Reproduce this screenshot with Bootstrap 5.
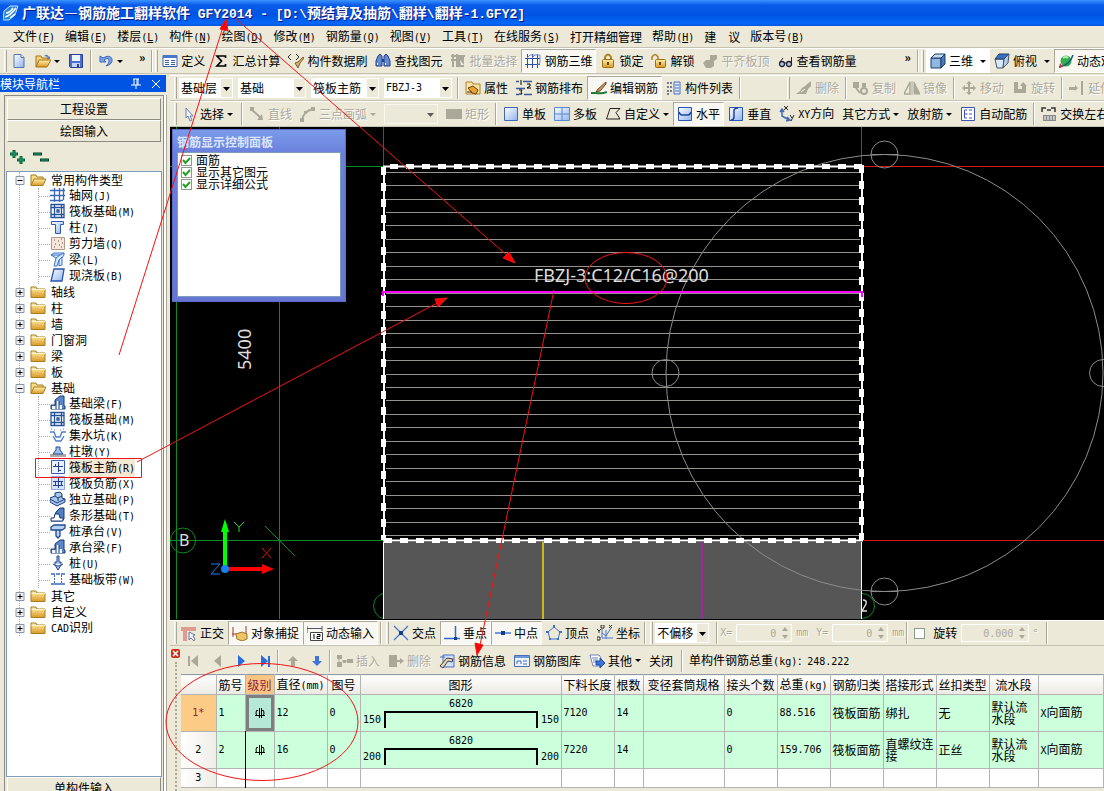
<!DOCTYPE html>
<html lang="zh-CN">
<head>
<meta charset="utf-8">
<meta name="viewport" content="width=device-width, initial-scale=1">
<title>广联达—钢筋施工翻样软件 GFY2014</title>
<link href="https://cdn.jsdelivr.net/npm/bootstrap@5.3.0/dist/css/bootstrap.min.css" rel="stylesheet">
<style>
:root{--face:#ece9d8;--edge:#aca899;--ui:"Noto Sans CJK SC",sans-serif}
body{font:12px/16px var(--ui);color:#000;background:var(--face);height:100vh;overflow:hidden;white-space:nowrap}
.hw,u{font-family:"DejaVu Sans Mono","Noto Sans CJK SC",monospace;font-size:10px}
svg{flex:none;display:block}
.ico{width:16px;height:16px}
.titlebar{height:26px;padding-left:3px;background:linear-gradient(#3a93ff,#0a5ae8 20%,#0054e3 60%,#0468fb 90%,#0453d8);color:#fff;font-size:14px;font-weight:700;text-shadow:1px 1px #0a1883;gap:3px}
.titlebar .hw{font-family:"Liberation Mono",monospace;font-size:13px}
.menubar{height:22px;padding-left:8px;border-bottom:1px solid #c5c2b2}
.menubar .nav-link{color:#000;padding:0 5px}
.band{height:26px;border-top:1px solid #fff;border-bottom:1px solid #c5c2b2;overflow:hidden}
.grip{width:3px;height:22px;border-left:1px solid #fff;border-right:1px solid var(--edge);margin:0 2px 0 4px;flex:none}
.vsep{width:2px;height:22px;border-left:1px solid var(--edge);border-right:1px solid #fff;margin:0 2px;flex:none}
.tool{--bs-btn-color:#000;--bs-btn-disabled-color:#aca899;--bs-btn-disabled-opacity:1;--bs-btn-disabled-border-color:transparent;font:12px/16px var(--ui);padding:0 3px;height:24px;border-radius:0;display:flex;align-items:center;gap:3px;flex:none}
.tool:disabled{text-shadow:1px 1px #fff}
.tool.on{background:#f8f7f2;border-color:#aca899 #fff #fff #aca899}
.arr{width:0;height:0;border:3px solid transparent;border-top-color:currentColor;border-bottom:0}
.viewtools{margin-left:40px}
.pick{appearance:none;font:12px/18px var(--ui);height:20px;padding:0 14px 0 2px;border:0;border-radius:0;color:#000;margin-right:5px;flex:none;background:#fff url("data:image/svg+xml,%3Csvg xmlns='http://www.w3.org/2000/svg' width='14' height='20'%3E%3Cpath fill='%23ece9d8' d='M2 1h11v18H2z'/%3E%3Cpath d='M4 9h7l-3.500 4z'/%3E%3C/svg%3E") right/14px 20px no-repeat}
.pick.hw{font:10px/18px "DejaVu Sans Mono",monospace}
.pick:disabled{background-color:var(--face);border:1px solid #fff;opacity:.6}
.w54{width:54px}.w68{width:68px}
.side{width:170px;flex:none}
.panehead{width:166px;height:17px;background:#0054e3;color:#fff;margin-top:1px}
.pane{width:160px;margin:3px 0 0 4px;padding-top:2px;border:1px solid #8c8c84;border-bottom:0;box-shadow:2px 0 #fff,3px 0 #aca899;min-height:0}
.tabbtn{font:12px/16px var(--ui);height:22px;padding:0;border:1px solid;border-color:#fff #8c8c84 #8c8c84 #fff;border-radius:0;background:var(--face);width:154px;color:#000}
.lastbtn{margin-bottom:-8px}
.expand{flex:0 0 29px}
.treebox{background:#fff;border:1px solid #7f9db9;width:156px;overflow:hidden;min-height:0}
.lv0{margin:0 0 0 12px;border-left:1px dotted #aaa}
.lv1{margin:0 0 0 18px;border-left:1px dotted #aaa}
.lv1 li{display:flex;align-items:center;height:16px}
.lv1 li::before{content:"";width:11px;border-top:1px dotted #aaa}
.lv1 a{display:flex;gap:3px}
.side a{color:#000;text-decoration:none}
.fold{display:flex;align-items:center;height:16px;margin-left:-5px}
.fold svg.ico{margin:0 5px}
.hot{background:#f3e8d6}
.work{min-width:0;padding-top:1px}
.viewport{background:#000;min-height:0;position:relative;overflow:hidden}
.floatbox{position:absolute;left:2px;top:2px;width:174px;height:173px;background:linear-gradient(#7b9bea,#6a7fdc 14%,#6576d4);border:1px solid #5c6cc8;padding:3px 4px}
.floatbox h2{font:bold 12px/18px var(--ui);color:#dbe6fb;margin:0;height:19px}
.floatbox .inner{background:#fff;border:1px solid #7f9db9;height:145px;padding-top:1px}
.opt{display:flex;align-items:center;gap:4px;height:12px;line-height:12px;padding-left:3px}
.tick{width:11px;height:11px;margin:0;border:1px solid #8c9a8c;border-radius:0!important;flex:none}
.tick:checked{background:#fff url("data:image/svg+xml,%3Csvg xmlns='http://www.w3.org/2000/svg' viewBox='0 0 9 9'%3E%3Cpath d='M1 4l2.500 3L8 2' fill='none' stroke='%2321a121' stroke-width='2'/%3E%3C/svg%3E");border-color:#8c9a8c}
.scene text{fill:#ddd;font-family:"Noto Sans",sans-serif}
.num{height:18px;border:1px solid #fff;border-radius:0;background:transparent!important;color:#aca899;text-align:right;padding:0 15px 0 2px;font:10px/16px "DejaVu Sans Mono",monospace;width:56px;flex:none}
.num.w68{width:68px}
.spinbox{position:relative}
.spinbox svg{position:absolute;right:3px;top:3px}
.dim{color:#aca899;text-shadow:1px 1px #fff}
.editor{height:145px;overflow:hidden;padding-top:1px}
.editbar{height:27px}
.shut{width:9px;height:9px;padding:0;border:0;border-radius:2px;background:#c8321e;margin-top:2px}
.rail{width:11px}
.dots{width:2px;border-left:2px dotted #aaa794;margin-top:4px}
.grid{--bs-table-bg:transparent;table-layout:fixed;margin:0;background:#fff;border-top:1px solid #8c9aa8;width:100%}
.grid th,.grid td{padding:0 0 0 2px;border:1px solid #b4b4b4;border-width:0 1px 1px 0;font-weight:400;line-height:12px;height:37px;vertical-align:middle;color:#000;overflow:hidden}
.grid thead th{height:20px;padding:0;text-align:center;background:linear-gradient(#fff,#ebe9e2)}
.grid tbody th{text-align:center;padding:0;background:linear-gradient(90deg,#fff,#efede6)}
.grid .fill td{background:#ccffdc}
.grid .blank th,.grid .blank td{height:19px}
.grid thead .cur{background:#f9c583;color:#902040}
.grid tbody .cur{background:#fccb85;color:#902040}
.grid .sel{background:#b6e8d8!important;box-shadow:inset 0 0 0 3px #7f7f7f}
.grid .lvl{text-align:center;padding:0}
.grid .lvl svg{margin:auto}
.grid .wrap{white-space:normal}
.grid .shape{padding:0}
.marks{position:absolute;inset:0;width:100%;height:100%;pointer-events:none;z-index:5}
</style>
</head>
<body class="d-flex flex-column position-relative">
<svg width="0" height="0" class="position-absolute" aria-hidden="true"><defs>
<linearGradient id="gb" x2="1" y2="1"><stop stop-color="#fff"/><stop offset="1" stop-color="#8fb4ee"/></linearGradient>
<linearGradient id="gy" x2="0" y2="1"><stop stop-color="#fff0ae"/><stop offset="1" stop-color="#d99a25"/></linearGradient>
<symbol id="logo" viewBox="0 0 16 16"><path d="M1 6L7 1h8l-3 9-6 5H0z" fill="#2a86d8" stroke="#bfe4ff"/><path d="M2 12q5-1 11-9M3 8q4 0 7-5M7 13l5-4" stroke="#fff" stroke-width="1.500" fill="none"/></symbol>
<symbol id="new" viewBox="0 0 16 16"><path d="M3 1.500h7l3 3v10H3z" fill="url(#gb)" stroke="#5574a8"/><path d="M10 1.500v3h3" fill="#fff" stroke="#5574a8"/></symbol>
<symbol id="open" viewBox="0 0 16 16"><path d="M1 14V3h5l1 2h6v2" fill="#f5d27a" stroke="#a57314"/><path d="M1 14l3-7h12l-4 7z" fill="url(#gy)" stroke="#a57314"/><path d="M9 3q3-3 5 1l1-1v3h-3l1-1q-1-2-4-2" fill="#5a7fc0"/></symbol>
<symbol id="save" viewBox="0 0 16 16"><path d="M1.500 1.500h13v13h-12l-1-1z" fill="#4d6fd0" stroke="#283f94"/><path d="M4 2h8v6H4z" fill="#eef3ff"/><path d="M4 10h8v4H4z" fill="#c9d5ee"/><path d="M9 11h2v3H9z" fill="#283f94"/></symbol>
<symbol id="undo" viewBox="0 0 16 16"><path d="M2 3v6h6L6 7q4-3 5 0 1 3-3 6 7-2 6-7-2-5-9-1z" fill="#7ba4e6" stroke="#3b66bd"/></symbol>
<symbol id="def" viewBox="0 0 16 16"><path d="M1 2.500h14v11H1z" fill="#fff" stroke="#3a62b0"/><path d="M1 2h14v3H1z" fill="#4878cc"/><path d="M3 7.500h4M3 9.500h4M3 11.500h4M9 7.500h4M9 9.500h4M9 11.500h4" stroke="#3a62b0"/></symbol>
<symbol id="sum" viewBox="0 0 16 16"><path d="M12.500 5V3H4l4.500 5L4 13h8.500v-2" fill="none" stroke="#000" stroke-width="1.700"/></symbol>
<symbol id="brush" viewBox="0 0 16 16"><path d="M3 1L0 4l3 3M8 1l3 3-3 3" fill="none" stroke="#333"/><path d="M15 4l-5 5-3 1 3 5 2-5 4-5z" fill="#d9b15c" stroke="#776034"/></symbol>
<symbol id="find" viewBox="0 0 16 16"><path d="M3 3l2-2 2 2v10H1V8zM13 3l-2-2-2 2v10h6V8z" fill="#6389d2" stroke="#243f88"/><path d="M7 6h2v3H7z" fill="#243f88"/><path d="M2.500 10v2M10.500 10v2" stroke="#fff"/></symbol>
<symbol id="batch" viewBox="0 0 16 16"><path d="M1 3h14M1 7h8M3 1v13M7 1v13" stroke="#aaa898" stroke-width="2"/><path d="M8 4h6v10H8z" fill="#aaa898"/><path d="M10 7l4 5h-3z" fill="#eee"/></symbol>
<symbol id="bars" viewBox="0 0 16 16"><path d="M0 5.500h15M0 11.500h15M2.500 1v14M7.500 1v14M12.500 1v14" stroke="#2c50a0" fill="none"/><path d="M2 5l3-3h10v8l-3 2M7 5l3-3" stroke="#7891c8" fill="none"/></symbol>
<symbol id="lock" viewBox="0 0 16 16"><path d="M5 7V4q3-5 6 0v3" fill="none" stroke="#b08125" stroke-width="2"/><rect x="2.500" y="6.500" width="11" height="8" rx="1" fill="url(#gy)" stroke="#9c6b12"/><path d="M8 9v3" stroke="#6a4505" stroke-width="2"/></symbol>
<symbol id="unlock" viewBox="0 0 16 16"><path d="M1 7V4q3-5 6 0v3" fill="none" stroke="#b08125" stroke-width="1.500"/><rect x="4.500" y="6.500" width="10" height="8" rx="1" fill="url(#gy)" stroke="#9c6b12"/><path d="M9 9v3" stroke="#6a4505" stroke-width="2"/></symbol>
<symbol id="slab" viewBox="0 0 16 16"><path d="M8 2h7v4l-3 2v5l-3 2H4l-3-5 3-3h4z" fill="#aaa898"/></symbol>
<symbol id="glass" viewBox="0 0 16 16"><circle cx="4" cy="11" r="2.500" fill="#b9c7e0" stroke="#223" stroke-width="1.300"/><circle cx="11" cy="11" r="2.500" fill="#b9c7e0" stroke="#223" stroke-width="1.300"/><path d="M7 10h1M2 9l3-4M13.500 10V4" stroke="#223" fill="none"/></symbol>
<symbol id="cube" viewBox="0 0 16 16"><path d="M1 5h10v10H1z" fill="#8fb9e4" stroke="#1c3c66"/><path d="M1 5l4-4h10l-4 4z" fill="#c6def5" stroke="#1c3c66"/><path d="M11 5l4-4v10l-4 4z" fill="#4a7cba" stroke="#1c3c66"/></symbol>
<symbol id="top3" viewBox="0 0 16 16"><path d="M1 6h9l-1 9H3z" fill="#dbe8f8" stroke="#456"/><path d="M1 6l4-5h10l-5 5z" fill="#3b6fc0" stroke="#1c3c66"/><path d="M10 6l5-5-1 9-5 5z" fill="#b5cce8" stroke="#456"/></symbol>
<symbol id="orbit" viewBox="0 0 16 16"><circle cx="8" cy="8" r="5.500" fill="#35ad4a"/><path d="M5 5q3-2 5 0" stroke="#b4f0b4" stroke-width="2" fill="none"/><path d="M1 14Q12 12 15 2" fill="none" stroke="#175d8c" stroke-width="1.500"/><path d="M1 15l1-5 3 4z" fill="#c33"/></symbol>
<symbol id="prop" viewBox="0 0 16 16"><path d="M1 2h6l1 2h7v10H1z" fill="#fbe3a0" stroke="#a8833a"/><path d="M3 8l5-2 5 4-2 4-4-1z" fill="#e9a037" stroke="#6e4210"/><path d="M2 12h5" stroke="#333"/></symbol>
<symbol id="rank" viewBox="0 0 16 16"><path d="M0 1.500h3M7 1.500h9M0 8.500h9M0 14.500h3M8 14.500h8" stroke="#38589c" stroke-width="1.300"/><path d="M5 0v5M11 4h3v2l-3 2h4M3 10h3l-1 2 1 2H3" stroke="#000" fill="none"/></symbol>
<symbol id="edit" viewBox="0 0 16 16"><path d="M15 2L7 9l-2 3 4-1 6-7z" fill="#d29d5c" stroke="#6b4322"/><path d="M0 13h5q6 1 11-1" stroke="#217a38" stroke-width="2" fill="none"/></symbol>
<symbol id="list" viewBox="0 0 16 16"><path d="M1 3h2M1 7h2M1 11h2M1 14h2M4 3h2M4 7h2M4 11h2" stroke="#557" stroke-width="1.500"/><path d="M8 2h6v12H8z" fill="#dce8fb" stroke="#4a6fb8"/><path d="M9 5h4M9 8h4M9 11h4" stroke="#4a6fb8"/></symbol>
<symbol id="del" viewBox="0 0 16 16"><path d="M15 1L9 6l-3 2-2 3-4 3h10l2-5 3-3z" fill="#aaa898"/><path d="M5 12l4-3" stroke="#fff"/></symbol>
<symbol id="copy" viewBox="0 0 16 16"><path d="M0 2h6v6H0zM9 3h4v4H9z" fill="#aaa898"/><circle cx="11" cy="11" r="3" fill="none" stroke="#aaa898" stroke-width="2"/><path d="M3 8l4 5" stroke="#aaa898" stroke-width="2"/></symbol>
<symbol id="mirror" viewBox="0 0 16 16"><path d="M6 2v12H0z" fill="none" stroke="#aaa898" stroke-width="1.500"/><path d="M8 1v14M10 2v12h6z" fill="#aaa898" stroke="#aaa898"/></symbol>
<symbol id="move" viewBox="0 0 16 16"><path d="M8 1l3 3H9v3h3V5l3 3-3 3V9H9v3h2l-3 3-3-3h2V9H4v2L1 8l3-3v2h3V4H5z" fill="#aaa898"/></symbol>
<symbol id="rotate" viewBox="0 0 16 16"><path d="M2 2h4v7h4V6H8l3-4 4 4h-1v7H2z" fill="#aaa898"/></symbol>
<symbol id="extend" viewBox="0 0 16 16"><path d="M0 7h6v3H0zM6 5l3 3-3 3zM12 1h2v14h-2z" fill="#aaa898"/></symbol>
<symbol id="arrow" viewBox="0 0 16 16"><path d="M5 2v10l2-2 2 5 2-1-2-4h3z" fill="#eef2fb" stroke="#6a80ac"/></symbol>
<symbol id="line" viewBox="0 0 16 16"><path d="M2 3l10 9" stroke="#aaa898" stroke-width="2"/><path d="M1 1h4v4H1zM14 14H8l5-6z" fill="#aaa898"/></symbol>
<symbol id="arc" viewBox="0 0 16 16"><path d="M2 15Q3 5 13 3" stroke="#aaa898" stroke-width="2" fill="none"/><path d="M11 1h4v4h-4zM0 12h4v4H0zM4 5h3v3H4z" fill="#aaa898"/></symbol>
<symbol id="rectg" viewBox="0 0 16 16"><path d="M0 3h16v10H0z" fill="#aaa898"/></symbol>
<symbol id="one" viewBox="0 0 16 16"><path d="M1.500 1.500h13v13h-13z" fill="url(#gb)" stroke="#4168b8"/></symbol>
<symbol id="four" viewBox="0 0 16 16"><path d="M.5 1.500h15v13H.5zM8 1v14M0 8h16" fill="url(#gb)" stroke="#5a86cc"/></symbol>
<symbol id="poly" viewBox="0 0 16 16"><path d="M5 2.500h10l-4 4 4 6.500H1.500z" fill="none" stroke="#222"/></symbol>
<symbol id="horz" viewBox="0 0 16 16"><path d="M1.500 1.500h13v13h-13z" fill="url(#gb)" stroke="#2c55b4"/><path d="M2 6q1 3 3 3h6q2 0 3-3" fill="none" stroke="#2145a0" stroke-width="1.500"/></symbol>
<symbol id="vert" viewBox="0 0 16 16"><path d="M1.500 1.500h13v13h-13z" fill="url(#gb)" stroke="#2c55b4"/><path d="M10 2q-4 0-4 3v6q0 3-3 3" fill="none" stroke="#2145a0" stroke-width="1.500"/></symbol>
<symbol id="xy" viewBox="0 0 16 16"><path d="M3 4v6l7 4M1 6l2-3 2 3M8 11l3 3-4 1" fill="none" stroke="#4169b8" stroke-width="1.500"/><path d="M5 0l4 4M9 0L5 4M11 9l2 3M15 9l-3 6" stroke="#222"/></symbol>
<symbol id="auto" viewBox="0 0 16 16"><path d="M1.500 1.500h13v13h-13z" fill="#fff" stroke="#3c50b8"/><path d="M7 4H4.500v8H7M4.500 8h3M9 4h3M9 12h3M9 8h3" fill="none" stroke="#3c50b8"/></symbol>
<symbol id="swap" viewBox="0 0 16 16"><path d="M1 6V2h4M14 6V2h-4M6 4h4" fill="none" stroke="#333" stroke-width="1.500"/><path d="M2 9h13v6H2z" fill="#888"/><path d="M4 10v4M7 10v4M10 10v4M13 10v4" stroke="#fff"/></symbol>
<symbol id="ortho" viewBox="0 0 16 16"><path d="M0 2h15v4H6v10H2V6H0z" fill="#df9b92"/><path d="M8 7v8l2-2 3 3 1-2-2-3 2-1z" fill="#eef" stroke="#68799c"/></symbol>
<symbol id="snap" viewBox="0 0 16 16"><path d="M1 2v10M14 1v8M0 9h15" stroke="#a33b2b" fill="none"/><path d="M4 9l6-2 5 2v5l-5 2-5-2z" fill="#eec566" stroke="#9d7529"/></symbol>
<symbol id="dyn" viewBox="0 0 16 16"><path d="M0 1v7M15 1v5M0 3.500h15" stroke="#556" fill="none"/><path d="M3.500 7.500h12v8h-12z" fill="#fff" stroke="#444"/><path d="M7 9v5M10 9.500h3v2h-3v2h3" stroke="#000" fill="none"/></symbol>
<symbol id="cross" viewBox="0 0 16 16"><path d="M1 1l14 14M15 1L1 15" stroke="#4679d6" stroke-width="1.300"/><path d="M6 6h4v4H6z" fill="#173d8c"/></symbol>
<symbol id="perp" viewBox="0 0 16 16"><path d="M0 13.500h16M11.500 1v12" stroke="#3467ca" stroke-width="1.500"/><path d="M10 12h3v3h-3z" fill="#173d8c"/></symbol>
<symbol id="mid" viewBox="0 0 16 16"><path d="M0 8h16" stroke="#4679d6" stroke-width="1.500"/><path d="M6 6h4v4H6z" fill="#173d8c"/></symbol>
<symbol id="vertex" viewBox="0 0 16 16"><path d="M8 2l6 5-2 7H4L2 7z" fill="none" stroke="#3d70c8"/><path d="M7 0h2v3H7zM0 6h3v2H0zM13 6h3v2h-3zM3 13h2v2H3zM11 13h2v2h-2z" fill="#3d70c8"/></symbol>
<symbol id="coord" viewBox="0 0 16 16"><path d="M5 3v10h11M5 8l4 3 5-8M9 5v9" fill="none" stroke="#4679d6"/><path d="M0 4l2 2 2-2M2 6v2M7 0h-3v3h3zM12 0l3 3M15 0l-3 3M0 12h3v3H0z" stroke="#333" fill="none"/></symbol>
<symbol id="ins" viewBox="0 0 16 16"><path d="M0 2h5v4H0zM0 9h5v5H0zM6 7h3v3H6zM10 6h6v4h-6z" fill="#aaa898"/><path d="M2 6v4M5 8h6" stroke="#aaa898"/></symbol>
<symbol id="rem" viewBox="0 0 16 16"><path d="M1 2h8v12H1zM9 7h3V5l4 3-4 3V9H9z" fill="#aaa898"/></symbol>
<symbol id="info" viewBox="0 0 16 16"><path d="M1 4h5M4 2h11v12H4z" fill="#cfe0f8" stroke="#4a6fb8"/><path d="M1 13l7-8 6 1-1 3-4-1-5 7z" fill="#f3d59a" stroke="#2d3f66"/></symbol>
<symbol id="lib" viewBox="0 0 16 16"><path d="M.5 2.500h15v11H.5z" fill="#eaf2ff" stroke="#4a6fb8"/><path d="M1 3h14v2H1z" fill="#6d97dc"/><path d="M3 11V8h4v3M9 8h4M9 11h4" fill="none" stroke="#4a6fb8"/></symbol>
<symbol id="other" viewBox="0 0 16 16"><path d="M1 2h9l2 3v8H4z" fill="#fff" stroke="#6a83b5"/><path d="M3 5h6M4 7h5M4 9h3" stroke="#6a83b5"/><path d="M7 8h4V5l5 5-5 5v-3H7z" fill="#3f74d8" stroke="#234a9c"/></symbol>
<symbol id="fc" viewBox="0 0 16 16"><path d="M1 13.500V3h5l1 2h8v8.500z" fill="url(#gy)" stroke="#a57c1e"/><path d="M1.500 5.500H15" stroke="#fff5c8"/></symbol>
<symbol id="fo" viewBox="0 0 16 16"><path d="M1 13V3h5l1 2h6v2" fill="#f8dc88" stroke="#a57c1e"/><path d="M1 13.500L4 7h12l-3 6.500z" fill="url(#gy)" stroke="#a57c1e"/></symbol>
<symbol id="minus" viewBox="0 0 9 9"><path d="M.5.5h8v8h-8z" fill="#f4f2ec" stroke="#8795ab"/><path d="M2 4.500h5" stroke="#000"/></symbol>
<symbol id="plus" viewBox="0 0 9 9"><path d="M.5.5h8v8h-8z" fill="#f4f2ec" stroke="#8795ab"/><path d="M2 4.500h5M4.500 2v5" stroke="#000"/></symbol>
<symbol id="t1" viewBox="0 0 16 16"><path d="M0 3.500h15M0 8.500h15M0 13.500h13M4.500 1v14M9.500 1v14M13.500 1v12" stroke="#3a68bd" stroke-width="1.300"/></symbol>
<symbol id="t2" viewBox="0 0 16 16"><path d="M1 1.500h13v13H1zM4.500 4.500h7v7h-7zM7 7h2v2H7zM4.500 1v14M11.500 1v14M1 4.500h13M1 11.500h13" fill="none" stroke="#24509c" stroke-width="1.300"/></symbol>
<symbol id="t3" viewBox="0 0 16 16"><path d="M1.500 2.500h12v3h-3v9h-5v-9h-4z" fill="url(#gb)" stroke="#2d5bb0"/></symbol>
<symbol id="t4" viewBox="0 0 16 16"><path d="M1.500 2.500h13v12h-13z" fill="#f6e6dc" stroke="#b59887"/><path d="M4 5h1M8 6h1M11 4h1M5 9h1M9 10h1M12 8h1M4 12h1M11 12h1" stroke="#744"/></symbol>
<symbol id="t5" viewBox="0 0 16 16"><path d="M1 4l3-2h10v2l-2 3v7l-3 1V9l-2 6H4l2-8z" fill="#d8e8fc" stroke="#3b75c8"/><path d="M1 4h9l-4 3M10 4l4-2M9 9l3-3" stroke="#3b75c8" fill="none"/></symbol>
<symbol id="t6" viewBox="0 0 16 16"><path d="M4 2h10l-2 12H1z" fill="url(#gb)" stroke="#2854aa" stroke-width="1.300"/></symbol>
<symbol id="t7" viewBox="0 0 16 16"><path d="M1 14v-4h4V5l5-4h4v10h1v3z" fill="#5b87c8" stroke="#183a78"/><path d="M6 6h3v4h3v4H2v-3h4z" fill="#eef5ff"/><path d="M6 6v8M9 6v8" stroke="#183a78"/></symbol>
<symbol id="t8" viewBox="0 0 16 16"><path d="M0 5h4l2 5h4l2-5h4M3 9l3 5h5l3-5" fill="none" stroke="#4d7cc4" stroke-width="1.300"/><path d="M1 2h1M4 3h1M10 3h1M13 2h1" stroke="#4d7cc4"/></symbol>
<symbol id="t9" viewBox="0 0 16 16"><path d="M0 11h16v3H0z" fill="#aaa"/><path d="M3 11l3-4V4h4v3l3 4z" fill="#9fc0ec" stroke="#234c94"/></symbol>
<symbol id="t10" viewBox="0 0 16 16"><path d="M1.500 1.500h13v13h-13z" fill="#eaf1ff" stroke="#3a5cb8"/><path d="M3 7.500h10M8.500 3v10M5.500 5v3M8 11.500h3" stroke="#223f94" fill="none"/></symbol>
<symbol id="t11" viewBox="0 0 16 16"><path d="M1.500 1.500h13v13h-13z" fill="#d6e3fb" stroke="#8ba4dc"/><path d="M3 6.500h10M3 10.500h10M8.500 3v10M5.500 6v5M11.500 6v5" stroke="#223f94" fill="none"/></symbol>
<symbol id="t12" viewBox="0 0 16 16"><path d="M0 7l5-2V2l5-1 2 2v4l3 1v3l-8 4-7-4z" fill="#a9c5ec" stroke="#183a78"/><path d="M5 5l3 2 4-2M8 7v3M0 8l7 4 8-4" fill="none" stroke="#183a78"/></symbol>
<symbol id="t13" viewBox="0 0 16 16"><path d="M1 14l3-3 2-6 4-4h4v11l-2 2z" fill="#537fc0" stroke="#183a78"/><path d="M1 14v-3h3l1-4h4l1 4h3v3z" fill="#fff" stroke="#183a78"/></symbol>
<symbol id="t14" viewBox="0 0 16 16"><path d="M1 4l3-2h11v3l-3 2H1zM6 7h4v6l-2 2-2-2z" fill="#b8d0f2" stroke="#21498e" stroke-width="1.300"/></symbol>
<symbol id="t15" viewBox="0 0 16 16"><path d="M7 1h2v6h2v3l-3 5-3-5V7h2zM3 9q5 4 10 0" fill="#a9c5ec" stroke="#21498e"/></symbol>
<symbol id="t16" viewBox="0 0 16 16"><path d="M1 3h4M6 3h4M11 3h4M1 13h14" stroke="#3c68b8" stroke-width="1.500"/><path d="M4.500 4v9M11.500 4v9" stroke="#3c68b8" stroke-dasharray="2 1"/></symbol>
<symbol id="reb" viewBox="0 0 12 12"><path d="M5.500 1v10M7.500 1v10M1 8.500h10M4 3.500H2.500q-1 2.500 0 5M8 3.500h1.500q1 2.500 0 5" fill="none" stroke="#000"/></symbol>
<symbol id="spin" viewBox="0 0 8 12"><path d="M4 0l3 4H1zM4 12L1 8h6z" fill="#aca899"/></symbol>
</defs></svg>

<header class="titlebar d-flex align-items-center flex-shrink-0"><svg class="ico"><use href="#logo"/></svg><span>广联达—钢筋施工翻样软件<span class="hw">&nbsp;GFY2014 - [D:\</span>预结算及抽筋<span class="hw">\</span>翻样<span class="hw">\</span>翻样<span class="hw">-1.GFY2]</span></span></header>

<nav class="menubar nav flex-nowrap align-items-center flex-shrink-0" aria-label="菜单">
<a class="nav-link" href="#">文件<span class="hw">(<u>F</u>)</span></a><a class="nav-link" href="#">编辑<span class="hw">(<u>E</u>)</span></a><a class="nav-link" href="#">楼层<span class="hw">(<u>L</u>)</span></a><a class="nav-link" href="#">构件<span class="hw">(<u>N</u>)</span></a><a class="nav-link" href="#">绘图<span class="hw">(<u>D</u>)</span></a><a class="nav-link" href="#">修改<span class="hw">(<u>M</u>)</span></a><a class="nav-link" href="#">钢筋量<span class="hw">(<u>Q</u>)</span></a><a class="nav-link" href="#">视图<span class="hw">(<u>V</u>)</span></a><a class="nav-link" href="#">工具<span class="hw">(<u>T</u>)</span></a><a class="nav-link" href="#">在线服务<span class="hw">(<u>S</u>)</span></a><a class="nav-link" href="#">打开精细管理</a><a class="nav-link" href="#">帮助<span class="hw">(<u>H</u>)</span></a><a class="nav-link" href="#">建　议</a><a class="nav-link" href="#">版本号<span class="hw">(<u>B</u>)</span></a>
</nav>

<div class="band d-flex align-items-center flex-shrink-0" role="toolbar">
<span class="grip me-0"></span>
<button class="btn tool" aria-label="新建"><svg class="ico"><use href="#new"/></svg></button>
<button class="btn tool" aria-label="打开"><svg class="ico"><use href="#open"/></svg><i class="arr"></i></button>
<button class="btn tool" aria-label="保存"><svg class="ico"><use href="#save"/></svg></button>
<span class="vsep"></span>
<button class="btn tool" aria-label="撤销"><svg class="ico"><use href="#undo"/></svg><i class="arr"></i></button>
<button class="btn tool pb-2 ms-2 fw-bold" aria-label="更多">»</button>
<span class="vsep"></span><span class="grip ms-0 me-0"></span>
<button class="btn tool"><svg class="ico"><use href="#def"/></svg>定义</button>
<button class="btn tool"><svg class="ico"><use href="#sum"/></svg>汇总计算</button>
<button class="btn tool"><svg class="ico"><use href="#brush"/></svg>构件数据刷</button>
<button class="btn tool"><svg class="ico"><use href="#find"/></svg>查找图元</button>
<button class="btn tool" disabled><svg class="ico"><use href="#batch"/></svg>批量选择</button>
<button class="btn tool on"><svg class="ico"><use href="#bars"/></svg>钢筋三维</button>
<button class="btn tool"><svg class="ico"><use href="#lock"/></svg>锁定</button>
<button class="btn tool"><svg class="ico"><use href="#unlock"/></svg>解锁</button>
<button class="btn tool" disabled><svg class="ico"><use href="#slab"/></svg>平齐板顶</button>
<button class="btn tool"><svg class="ico"><use href="#glass"/></svg>查看钢筋量</button>
<div class="d-flex align-items-center flex-shrink-0 viewtools">
<button class="btn tool pb-2 fw-bold" aria-label="更多">»</button>
<span class="vsep"></span><span class="grip ms-0"></span>
<button class="btn tool bg-white"><svg class="ico"><use href="#cube"/></svg>三维<i class="arr ms-1"></i></button>
<button class="btn tool"><svg class="ico"><use href="#top3"/></svg>俯视<i class="arr ms-1"></i></button>
<button class="btn tool on"><svg class="ico"><use href="#orbit"/></svg>动态观</button>
</div>
</div>

<main class="d-flex flex-grow-1 overflow-hidden">
<aside class="side d-flex flex-column">
<div class="panehead d-flex align-items-center justify-content-between flex-shrink-0"><span>模块导航栏</span><span class="d-flex gap-2 pe-1"><svg width="12" height="12"><path d="M3 1h6M4 1v6M8 1v6M7 1v6M1 7h10M6 7v4" stroke="#fff" fill="none"/></svg><svg width="12" height="12"><path d="M2 2l8 8M10 2L2 10" stroke="#fff"/></svg></span></div>
<div class="pane d-flex flex-column flex-grow-1 align-items-center">
<button class="btn tabbtn flex-shrink-0">工程设置</button>
<button class="btn tabbtn flex-shrink-0">绘图输入</button>
<div class="expand d-flex align-items-center align-self-stretch gap-2 ps-1"><svg width="16" height="16"><path d="M1 5h8M5 1v8M8 11h8M12 7v8" stroke="#063" stroke-width="3"/><path d="M2 5h6M5 2v6M9 11h6M12 8v6" stroke="#2a9a7a"/></svg><svg width="16" height="16"><path d="M0 5h9M7 11h9" stroke="#042" stroke-width="3"/><path d="M1 5h7M8 11h7" stroke="#2a9a7a"/></svg></div>
<div class="treebox flex-grow-1">
<ul class="list-unstyled lv0">
<li><a class="fold" href="#"><svg width="10" height="9"><use href="#minus"/></svg><svg class="ico"><use href="#fo"/></svg>常用构件类型</a>
<ul class="list-unstyled lv1">
<li><a href="#"><svg class="ico"><use href="#t1"/></svg><span>轴网<span class="hw">(J)</span></span></a></li>
<li><a href="#"><svg class="ico"><use href="#t2"/></svg><span>筏板基础<span class="hw">(M)</span></span></a></li>
<li><a href="#"><svg class="ico"><use href="#t3"/></svg><span>柱<span class="hw">(Z)</span></span></a></li>
<li><a href="#"><svg class="ico"><use href="#t4"/></svg><span>剪力墙<span class="hw">(Q)</span></span></a></li>
<li><a href="#"><svg class="ico"><use href="#t5"/></svg><span>梁<span class="hw">(L)</span></span></a></li>
<li><a href="#"><svg class="ico"><use href="#t6"/></svg><span>现浇板<span class="hw">(B)</span></span></a></li>
</ul></li>
<li><a class="fold" href="#"><svg width="10" height="9"><use href="#plus"/></svg><svg class="ico"><use href="#fc"/></svg>轴线</a></li>
<li><a class="fold" href="#"><svg width="10" height="9"><use href="#plus"/></svg><svg class="ico"><use href="#fc"/></svg>柱</a></li>
<li><a class="fold" href="#"><svg width="10" height="9"><use href="#plus"/></svg><svg class="ico"><use href="#fc"/></svg>墙</a></li>
<li><a class="fold" href="#"><svg width="10" height="9"><use href="#plus"/></svg><svg class="ico"><use href="#fc"/></svg>门窗洞</a></li>
<li><a class="fold" href="#"><svg width="10" height="9"><use href="#plus"/></svg><svg class="ico"><use href="#fc"/></svg>梁</a></li>
<li><a class="fold" href="#"><svg width="10" height="9"><use href="#plus"/></svg><svg class="ico"><use href="#fc"/></svg>板</a></li>
<li><a class="fold" href="#"><svg width="10" height="9"><use href="#minus"/></svg><svg class="ico"><use href="#fo"/></svg>基础</a>
<ul class="list-unstyled lv1">
<li><a href="#"><svg class="ico"><use href="#t7"/></svg><span>基础梁<span class="hw">(F)</span></span></a></li>
<li><a href="#"><svg class="ico"><use href="#t2"/></svg><span>筏板基础<span class="hw">(M)</span></span></a></li>
<li><a href="#"><svg class="ico"><use href="#t8"/></svg><span>集水坑<span class="hw">(K)</span></span></a></li>
<li><a href="#"><svg class="ico"><use href="#t9"/></svg><span>柱墩<span class="hw">(Y)</span></span></a></li>
<li><a href="#"><svg class="ico"><use href="#t10"/></svg><span class="hot">筏板主筋<span class="hw">(R)</span></span></a></li>
<li><a href="#"><svg class="ico"><use href="#t11"/></svg><span>筏板负筋<span class="hw">(X)</span></span></a></li>
<li><a href="#"><svg class="ico"><use href="#t12"/></svg><span>独立基础<span class="hw">(P)</span></span></a></li>
<li><a href="#"><svg class="ico"><use href="#t13"/></svg><span>条形基础<span class="hw">(T)</span></span></a></li>
<li><a href="#"><svg class="ico"><use href="#t14"/></svg><span>桩承台<span class="hw">(V)</span></span></a></li>
<li><a href="#"><svg class="ico"><use href="#t7"/></svg><span>承台梁<span class="hw">(F)</span></span></a></li>
<li><a href="#"><svg class="ico"><use href="#t15"/></svg><span>桩<span class="hw">(U)</span></span></a></li>
<li><a href="#"><svg class="ico"><use href="#t16"/></svg><span>基础板带<span class="hw">(W)</span></span></a></li>
</ul></li>
<li><a class="fold" href="#"><svg width="10" height="9"><use href="#plus"/></svg><svg class="ico"><use href="#fc"/></svg>其它</a></li>
<li><a class="fold" href="#"><svg width="10" height="9"><use href="#plus"/></svg><svg class="ico"><use href="#fc"/></svg>自定义</a></li>
<li><a class="fold" href="#"><svg width="10" height="9"><use href="#plus"/></svg><svg class="ico"><use href="#fc"/></svg><span><span class="hw">CAD</span>识别</span></a></li>
</ul>
</div>
<button class="btn tabbtn lastbtn flex-shrink-0">单构件输入</button>
</div>
</aside>

<section class="work d-flex flex-column flex-grow-1">
<div class="band d-flex align-items-center flex-shrink-0" role="toolbar">
<span class="grip"></span>
<select class="pick w54" aria-label="楼层"><option>基础层</option></select>
<select class="pick w68" aria-label="类型"><option>基础</option></select>
<select class="pick w68" aria-label="构件类型"><option>筏板主筋</option></select>
<select class="pick w68 hw" aria-label="构件"><option>FBZJ-3</option></select>
<span class="vsep ms-0"></span>
<button class="btn tool"><svg class="ico"><use href="#prop"/></svg>属性</button>
<button class="btn tool"><svg class="ico"><use href="#rank"/></svg>钢筋排布</button>
<button class="btn tool on"><svg class="ico"><use href="#edit"/></svg>编辑钢筋</button>
<button class="btn tool"><svg class="ico"><use href="#list"/></svg>构件列表</button>
<span class="vsep"></span>
<span class="ps-3 pe-4"></span>
<span class="grip"></span>
<button class="btn tool" disabled><svg class="ico"><use href="#del"/></svg>删除</button>
<span class="vsep"></span>
<button class="btn tool" disabled><svg class="ico"><use href="#copy"/></svg>复制</button>
<button class="btn tool" disabled><svg class="ico"><use href="#mirror"/></svg>镜像</button>
<span class="vsep"></span>
<button class="btn tool" disabled><svg class="ico"><use href="#move"/></svg>移动</button>
<button class="btn tool" disabled><svg class="ico"><use href="#rotate"/></svg>旋转</button>
<span class="vsep"></span>
<button class="btn tool" disabled><svg class="ico"><use href="#extend"/></svg>延伸</button>
</div>
<div class="band d-flex align-items-center flex-shrink-0" role="toolbar">
<span class="grip me-0"></span>
<button class="btn tool"><svg class="ico"><use href="#arrow"/></svg>选择<i class="arr"></i></button>
<span class="vsep ms-1"></span>
<button class="btn tool" disabled><svg class="ico"><use href="#line"/></svg>直线</button>
<button class="btn tool" disabled><svg class="ico"><use href="#arc"/></svg>三点画弧<i class="arr"></i></button>
<select class="pick w54 ms-1 me-1" disabled aria-label="画弧方式"><option></option></select>
<button class="btn tool" disabled><svg class="ico"><use href="#rectg"/></svg>矩形</button>
<span class="vsep"></span>
<button class="btn tool"><svg class="ico"><use href="#one"/></svg>单板</button>
<button class="btn tool"><svg class="ico"><use href="#four"/></svg>多板</button>
<button class="btn tool"><svg class="ico"><use href="#poly"/></svg>自定义<i class="arr"></i></button>
<button class="btn tool on"><svg class="ico"><use href="#horz"/></svg>水平</button>
<button class="btn tool"><svg class="ico"><use href="#vert"/></svg>垂直</button>
<button class="btn tool"><svg class="ico"><use href="#xy"/></svg><span><span class="hw">XY</span>方向</span></button>
<button class="btn tool">其它方式<i class="arr"></i></button>
<button class="btn tool">放射筋<i class="arr"></i></button>
<button class="btn tool"><svg class="ico"><use href="#auto"/></svg>自动配筋</button>
<span class="vsep"></span>
<button class="btn tool"><svg class="ico"><use href="#swap"/></svg>交换左右</button>
</div>

<div class="viewport flex-grow-1">
<svg class="scene w-100 h-100"><g transform="translate(-170 -127)" fill="none">
<path d="M176.500 127v492M279.500 127v492M170 166.500h214M170 540.500h214M265 526l30 30" stroke="#0a8a20"/>
<path d="M384 542h478v77H384z" fill="#565656"/>
<path d="M543 542v77" stroke="#c8b820" stroke-width="2"/><path d="M702 542v77" stroke="#9c2a9c" stroke-width="2"/>
<path d="M383.500 542v77M861.500 542v77" stroke="#fff"/>
<path d="M383.500 127v39M861.500 127v39M862 166.500h2000M862 540.500h2000" stroke="#d81616"/>
<path d="M386 172.500h474M386 185.500h474M386 199.500h474M386 212.500h474M386 225.500h474M386 239.500h474M386 252.500h474M386 266.500h474M386 279.500h474M386 293.500h474M386 306.500h474M386 320.500h474M386 333.500h474M386 347.500h474M386 360.500h474M386 374.500h474M386 387.500h474M386 400.500h474M386 414.500h474M386 427.500h474M386 441.500h474M386 454.500h474M386 468.500h474M386 481.500h474M386 495.500h474M386 508.500h474M386 522.500h474M386 535.500h474" stroke="#96928e"/>
<g stroke="#8c8c8c"><circle cx="884.500" cy="373" r="218.500"/><circle cx="884.500" cy="154.500" r="13.500"/><circle cx="884.500" cy="591.500" r="13.500"/><circle cx="665.500" cy="373" r="13.500"/><circle cx="1103" cy="373" r="13.500"/><path d="M871 154.500h27M871 591.500h27"/></g>
<path d="M384 166.500h478v374H384z" stroke="#fff" stroke-width="2"/>
<path d="M390 166.500h472M384 540.500h478M383.500 167v373M861.500 165v375" stroke="#fff" stroke-width="5" stroke-dasharray="8 8"/>
<path d="M383 296v-4h479v5" stroke="#f0f" stroke-width="2"/>
<circle cx="183" cy="540.500" r="12.500" stroke="#0a8a20"/>
<path d="M383 593.500a13 13 0 0 0 0 25M862 593.500a12 12 0 0 1 0 25" stroke="#0a8a20"/>
<text x="179" y="546" font-size="16">B</text>
<text x="534" y="282" font-size="18">FBZJ-3:C12/C16@200</text>
<text transform="translate(251 370) rotate(-90)" font-size="18">5400</text>
<path d="M863 600q4 0 3 4l-4 7h5" stroke="#ddd" stroke-width="1.500"/>
<path d="M225 569v-39" stroke="#0f0" stroke-width="4"/><path d="M225 519l-4 13h8z" fill="#0f0"/>
<path d="M225 569h38" stroke="red" stroke-width="4"/><path d="M274 569l-12-5v10z" fill="red"/>
<circle cx="225" cy="569" r="4" fill="#1680f0"/>
<path d="M234 522l5 5 5-5M239 527v5" stroke="#2ad42a"/><path d="M262 548l9 10M271 548l-9 10" stroke="#d11"/><path d="M211 564h9l-9 10h9" stroke="#1680f0"/>
</g></svg>
<div class="floatbox"><h2>钢筋显示控制面板</h2><div class="inner">
<label class="opt"><input class="form-check-input tick" type="checkbox" checked>面筋</label>
<label class="opt"><input class="form-check-input tick" type="checkbox" checked>显示其它图元</label>
<label class="opt"><input class="form-check-input tick" type="checkbox" checked>显示详细公式</label>
</div></div>
</div>

<div class="band d-flex align-items-center flex-shrink-0" role="toolbar">
<span class="grip me-0"></span>
<button class="btn tool"><svg class="ico"><use href="#ortho"/></svg>正交</button>
<button class="btn tool on"><svg class="ico"><use href="#snap"/></svg>对象捕捉</button>
<button class="btn tool on"><svg class="ico"><use href="#dyn"/></svg>动态输入</button>
<span class="vsep me-0"></span><span class="grip me-0"></span>
<button class="btn tool"><svg class="ico"><use href="#cross"/></svg>交点</button>
<button class="btn tool on"><svg class="ico"><use href="#perp"/></svg>垂点</button>
<button class="btn tool on"><svg class="ico"><use href="#mid"/></svg>中点</button>
<button class="btn tool"><svg class="ico"><use href="#vertex"/></svg>顶点</button>
<button class="btn tool"><svg class="ico"><use href="#coord"/></svg>坐标</button>
<span class="vsep ms-0 me-0"></span><span class="grip"></span>
<select class="pick w54" aria-label="偏移"><option>不偏移</option></select>
<span class="vsep"></span>
<label class="hw dim me-1" for="ox">X=</label><span class="spinbox"><input class="form-control num" id="ox" value="0" disabled><svg width="8" height="12"><use href="#spin"/></svg></span><span class="hw dim ms-1 me-2">mm</span>
<label class="hw dim me-1" for="oy">Y=</label><span class="spinbox"><input class="form-control num" id="oy" value="0" disabled><svg width="8" height="12"><use href="#spin"/></svg></span><span class="hw dim ms-1">mm</span>
<span class="vsep"></span>
<input class="form-check-input tick ms-1 me-2" type="checkbox" id="rot"><label for="rot" class="me-1">旋转</label>
<span class="spinbox"><input class="form-control num w68" aria-label="角度" value="0.000" disabled><svg width="8" height="12"><use href="#spin"/></svg></span><span class="dim ms-1">°</span><span class="vsep ms-2"></span>
</div>

<div class="editor d-flex flex-shrink-0">
<div class="rail d-flex flex-column align-items-center flex-shrink-0"><button class="btn shut" aria-label="关闭面板"><svg width="9" height="9"><path d="M2 2l5 5M7 2L2 7" stroke="#fff" stroke-width="1.500"/></svg></button><span class="dots flex-grow-1"></span></div>
<div class="flex-grow-1 overflow-hidden">
<div class="editbar d-flex align-items-center">
<button class="btn tool" disabled aria-label="首条"><svg class="ico"><path d="M4 3v10" stroke="#aaa898" stroke-width="2"/><path d="M13 2v12L6 8z" fill="#aaa898"/></svg></button>
<button class="btn tool" disabled aria-label="上一条"><svg class="ico"><path d="M12 2v12L5 8z" fill="#aaa898"/></svg></button>
<button class="btn tool" aria-label="下一条"><svg class="ico"><path d="M5 2v12l7-6z" fill="#2a6be0"/></svg></button>
<button class="btn tool" aria-label="末条"><svg class="ico"><path d="M4 2v12l7-6z" fill="#2a6be0"/><path d="M12 3v11" stroke="#2a6be0" stroke-width="2"/></svg></button>
<span class="vsep ms-0"></span>
<button class="btn tool" disabled aria-label="上移"><svg class="ico"><path d="M8 3l5 5h-3v5H6V8H3z" fill="#aaa898"/></svg></button>
<button class="btn tool" aria-label="下移"><svg class="ico"><path d="M8 13l5-5h-3V3H6v5H3z" fill="#3f74d8"/></svg></button>
<span class="vsep ms-0"></span>
<button class="btn tool" disabled><svg class="ico"><use href="#ins"/></svg>插入</button>
<button class="btn tool" disabled><svg class="ico"><use href="#rem"/></svg>删除</button>
<button class="btn tool"><svg class="ico"><use href="#info"/></svg>钢筋信息</button>
<button class="btn tool"><svg class="ico"><use href="#lib"/></svg>钢筋图库</button>
<button class="btn tool"><svg class="ico"><use href="#other"/></svg>其他<i class="arr"></i></button>
<button class="btn tool">关闭</button>
<span class="vsep ms-1"></span>
<span class="ms-1">单构件钢筋总重<span class="hw">(kg)：248.222</span></span>
</div>
<table class="table grid">
<colgroup><col style="width:35px"><col style="width:29px"><col style="width:29px"><col style="width:53px"><col style="width:33px"><col style="width:201px"><col style="width:53px"><col style="width:29px"><col style="width:81px"><col style="width:53px"><col style="width:53px"><col style="width:53px"><col style="width:53px"><col style="width:53px"><col style="width:49px"><col></colgroup>
<thead><tr><th></th><th>筋号</th><th class="cur">级别</th><th>直径<span class="hw">(mm)</span></th><th>图号</th><th>图形</th><th>下料长度</th><th>根数</th><th>变径套筒规格</th><th>接头个数</th><th>总重<span class="hw">(kg)</span></th><th>钢筋归类</th><th>搭接形式</th><th>丝扣类型</th><th>流水段</th><th></th></tr></thead>
<tbody>
<tr class="fill"><th class="cur hw">1*</th><td class="hw">1</td><td class="lvl sel"><svg width="12" height="12"><use href="#reb"/></svg></td><td class="hw">12</td><td class="hw">0</td><td class="shape"><svg class="hw" width="200" height="36"><path d="M24 33V17h152v16" fill="none" stroke="#000" stroke-width="2"/><text x="88" y="12">6820</text><text x="2" y="28">150</text><text x="180" y="28">150</text></svg></td><td class="hw">7120</td><td class="hw">14</td><td></td><td class="hw">0</td><td class="hw">88.516</td><td>筏板面筋</td><td class="wrap">绑扎</td><td>无</td><td class="wrap">默认流水段</td><td><span class="hw">X</span>向面筋</td></tr>
<tr class="fill"><th class="hw">2</th><td class="hw">2</td><td class="lvl"><svg width="12" height="12"><use href="#reb"/></svg></td><td class="hw">16</td><td class="hw">0</td><td class="shape"><svg class="hw" width="200" height="36"><path d="M24 33V17h152v16" fill="none" stroke="#000" stroke-width="2"/><text x="88" y="12">6820</text><text x="2" y="28">200</text><text x="180" y="28">200</text></svg></td><td class="hw">7220</td><td class="hw">14</td><td></td><td class="hw">0</td><td class="hw">159.706</td><td>筏板面筋</td><td class="wrap">直螺纹连接</td><td>正丝</td><td class="wrap">默认流水段</td><td><span class="hw">X</span>向面筋</td></tr>
<tr class="blank"><th class="hw">3</th><td></td><td></td><td></td><td></td><td></td><td></td><td></td><td></td><td></td><td></td><td></td><td></td><td></td><td></td><td></td></tr>
</tbody></table>
</div>
</div>
</section>
</main>

<!-- red review marks over the window -->
<svg class="marks" fill="none" stroke="#f01414" aria-hidden="true">
<path d="M119 355L223 27M236 19L509 257M137 462L441 301M554 290L480 645M35.500 458.500h106v19h-106z"/>
<path d="M226 19l-6 10 8 2zM515 263l-12-5 6-6zM447 298l-9 9-3-8zM477 655l-2-12 8 2z" fill="red"/>
<ellipse cx="626" cy="278" rx="41" ry="25.500"/><ellipse cx="262" cy="722" rx="96" ry="58.500"/>
<path d="M245.500 731v57" stroke="#000"/>
</svg>
<script src="https://cdn.jsdelivr.net/npm/bootstrap@5.3.0/dist/js/bootstrap.bundle.min.js"></script>
</body>
</html>
